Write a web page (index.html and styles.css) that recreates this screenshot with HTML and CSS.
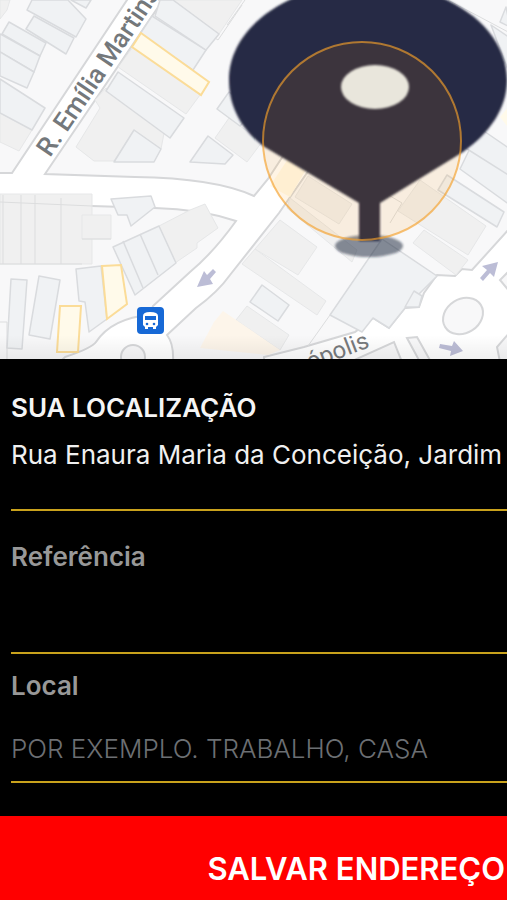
FILE: index.html
```
<!DOCTYPE html>
<html lang="pt-BR">
<head>
<meta charset="utf-8">
<meta name="viewport" content="width=device-width, initial-scale=1">
<title>Sua localização</title>
<link rel="stylesheet" href="styles.css">
</head>
<body>
<main class="screen">
  <svg class="map" viewBox="0 0 507 359" preserveAspectRatio="xMidYMid slice" role="img" aria-label="Mapa">
    <defs>
      <filter id="soft" x="-10%" y="-10%" width="120%" height="120%"><feGaussianBlur stdDeviation="1"/></filter>
      <linearGradient id="fade" x1="0" y1="0" x2="0" y2="1">
        <stop offset="0" stop-color="#000" stop-opacity="0"/>
        <stop offset="1" stop-color="#000" stop-opacity=".06"/>
      </linearGradient>
    </defs>
    <rect width="507" height="359" fill="#fff"/>
    <!-- city blocks -->
    <g class="block">
      <path d="M-3 -3H129L12 173H-3Z"/>
      <path d="M165 -3L45 174L135 177Q215 178 254 196L268 179L300 130L510 60V-3Z"/>
      <path d="M-3 201L92 206L155 208Q200 209 236 221Q213 253 190 272L153 306L150 315Q112 318 96 342Q92 348 65 357L60 362H-3Z"/>
      <path d="M167 335L196 308Q218 292 230 275L279 213L330 140L510 60V228L472 270L462 269L455 276L437 275L424 293L419 307L405 308L389 328L373 318L355 332L304 347L264 357V362H173Q174 344 167 335Z"/>
      <path d="M350 362L394 342L402 362Z"/>
      <path d="M407 338L417 337L431 362H420Z"/>
      <path d="M510 270L500 280L510 292Z"/>
      <path d="M510 332L497 347L500 362H510Z"/>
      <ellipse cx="463" cy="316" rx="21" ry="17" transform="rotate(-32 463 316)"/>
      <circle cx="133" cy="357" r="12"/>
    </g>
    <!-- plain buildings -->
    <g class="plain">
      <path d="M0 0H10L7 10L0 19Z"/>
      <path d="M0 113L32 130L19 151L0 142Z"/>
      <path d="M133 47L200 95L186 114L118 67Z"/>
      <path d="M106 88L165 128L161 149L134 130L114 161H94L76 147L100 108L95 100Z"/>
      <path d="M173 0H242L219 34Z"/>
      <path d="M229 118L262 142L247 162L215 138Z"/>
      <path d="M0 194H92V264H0Z"/><path d="M82 215H111V239H82Z"/>
      <path d="M159 226L190 210L205 204L218 228L197 243V248L175 263Z"/>
      <path d="M280 220L317 247L298 275L255 249Z"/>
      <path d="M255 249L326 301L317 315L242 264Z"/>
      <path d="M247 306L289 335L280 350L236 320Z"/>
      <path d="M308 176L352 204L339 224L295 197Z"/>
      <path d="M290 198L357 250L352 262L287 208Z"/>
      <path d="M420 180L486 226L468 255L398 211Z"/>
      <path d="M424 230L468 260L456 275L413 243Z"/>
    </g>
    <g class="plain-line">
      <path d="M3 195V264M21 195V264M35 195V264M61 198V264M0 202L92 206M0 264H82M82 239H111M0 322H7V359M118 67L152 16M158 0L218 40L242 5"/>
      <path d="M330 315L308 346M380 190L402 203L390 223M227 25L245 0M448 0L510 33"/>
    </g>
    <!-- outlined buildings -->
    <g class="house">
      <path d="M32 0H68L86 19L76 37L27 10Z"/>
      <path d="M34 16L74 38L66 54L26 29Z"/>
      <path d="M9 22L46 43L40 56L2 34Z"/>
      <path d="M0 34L40 56L34 72L0 52Z"/>
      <path d="M0 52L34 72L27 88L0 76Z"/>
      <path d="M0 79L45 108L32 130L0 113Z"/>
      <path d="M71 0L86 8L91 0Z"/>
      <path d="M152 16L206 50L193 70L140 34Z"/>
      <path d="M173 0L219 34L206 50L155 16L160 0Z"/>
      <path d="M118 72L184 118L170 138L106 91Z"/>
      <path d="M134 130L161 149L154 162H114Z"/>
      <path d="M208 136L233 155L225 164L190 162Z"/>
      <path d="M229 92L217 109L240 126L255 110Z"/>
      <path d="M111 199L151 196L155 207L131 226L127 215H118Z"/>
      <path d="M113 247L159 226L176 263L135 295Z"/><path d="M123 241L143 288M140 234L158 275"/>
      <path d="M76 269L101 266L107 319L89 332L85 302L79 301Z"/>
      <path d="M11 279L27 280L22 349L7 348Z"/>
      <path d="M39 276L60 280L50 339L29 335Z"/>
      <path d="M262 285L289 305L278 321L250 302Z"/>
      <path d="M382 239L437 276L405 308L389 328L373 318L362 332L330 315Z"/>
      <path d="M414 291L422 296L419 307H405Z"/>
      <path d="M447 175L504 212L497 227L438 190Z"/>
      <path d="M475 138L510 160V205L460 169Z"/>
      <path d="M478 127L510 149V176L464 147Z"/>
      <path d="M506 7L500 22L510 27ZM491 25L510 38V75Z"/>
    </g>
    <!-- commercial buildings -->
    <g class="shop">
      <path d="M141 33L209 82L201 95L132 47Z"/>
      <path d="M102 266L121 265L127 304L107 319Z"/>
      <path d="M60 306H81L78 352H57Z"/>
      <path d="M270 186L288 159L305 171L290 197Z" stroke="none"/>
      <path d="M500 117L510 105V130Z" stroke="none"/>
    </g>
    <path d="M223 311L280 350L268 355L200 348L214 322Z" fill="#fdf5ea"/>
    <!-- one-way arrows -->
    <g fill="#bcbdd6">
      <path d="M197 287L204 271L207 275L213 269L216 272L210 279L213 284Z"/>
      <path d="M498 262L494 277L490 273L483 281L480 278L487 270L482 266Z"/>
      <path d="M463 351L450 356L451 351L439 348L440 344L452 346L454 341Z"/>
    </g>
    <!-- street names -->
    <g class="street">
      <text transform="translate(50 158) rotate(-56)">R. Emília Martins</text>
      <text class="minor" transform="translate(310 370) rotate(-21)">ópolis</text>
    </g>
    <!-- bus stop -->
    <rect x="137" y="307" width="27" height="27" rx="4" fill="#1769d6"/>
    <path d="M143 316Q143 312 150 312Q158 312 158 316V325L156 327V329H153V327H148V329H145V327L143 325Z" fill="#fff"/>
    <path d="M145 316H156V320H145Z" fill="#1769d6"/>
    <circle cx="147" cy="324" r="1.3" fill="#1769d6"/><circle cx="154" cy="324" r="1.3" fill="#1769d6"/>
    <!-- location pin with its accuracy circle -->
    <g filter="url(#soft)">
      <ellipse cx="369" cy="246" rx="34" ry="11" fill="#1b2138" fill-opacity=".5"/>
      <path d="M263 146C240 128 229 105 229 80C229 26 291 -17 368 -17C445 -17 507 26 507 80C507 108 490 133 463 152L380 203V241H359V203Z" fill="#282c44"/>
    </g>
    <circle cx="362" cy="141" r="99" fill="#ff9800" fill-opacity=".1" stroke="#f5a02a" stroke-opacity=".65" stroke-width="2"/>
    <ellipse cx="375" cy="87" rx="34" ry="22" fill="#e9e6dc" filter="url(#soft)"/>
    <rect y="335" width="507" height="24" fill="url(#fade)"/>
  </svg>
  <form class="form">
    <div class="field address">
      <label class="title" for="address">SUA LOCALIZAÇÃO</label>
      <input id="address" type="text" value="Rua Enaura Maria da Conceição, Jardim">
    </div>
    <div class="field reference">
      <label for="reference">Referência</label>
      <input id="reference" type="text">
    </div>
    <div class="field place">
      <label for="place">Local</label>
      <input id="place" type="text" placeholder="POR EXEMPLO. TRABALHO, CASA">
    </div>
    <button class="save" type="button">SALVAR ENDEREÇO</button>
  </form>
</main>
</body>
</html>
```
FILE: styles.css
```
* { box-sizing: border-box; }
body {
  margin: 0;
  background: #000;
  font-family: Inter, "Liberation Sans", sans-serif;
}
.screen {
  display: flex;
  flex-direction: column;
  min-height: 100vh;
}
.map {
  display: block;
  flex: 1 1 0;
  min-height: 240px;
  width: 100%;
}
.block { fill: #f8f8f9; stroke: #d6d7d9; stroke-width: 2; }
.plain { fill: #f0f0f0; stroke: #e6e7e8; stroke-width: 1; }
.plain-line { fill: none; stroke: #dcddde; stroke-width: 1; }
.house { fill: #f0f2f4; stroke: #d9dbde; stroke-width: 1.5; stroke-linejoin: round; }
.shop { fill: #fffaea; stroke: #fbdc98; stroke-width: 2; }
.street {
  font: 500 26px Roboto, sans-serif;
  fill: #74787b;
  stroke: #fff;
  stroke-width: 2;
  paint-order: stroke;
}
.minor { font-size: 24px; font-weight: 400; fill: #787b7d; }
.form {
  display: flex;
  flex-direction: column;
  color: #fff;
}
.field {
  display: flex;
  flex-direction: column;
  margin-left: 11px;
  border-bottom: 2px solid #c9a21c;
}
label {
  color: #989898;
  font-size: 26px;
  font-weight: 600;
  line-height: 32px;
}
.title { color: #f5f5f5; }
input {
  width: 100%;
  height: 40px;
  padding: 0;
  border: 0;
  outline: 0;
  background: transparent;
  color: #f0f0f0;
  font: 400 26px Inter, "Liberation Sans", sans-serif;
}
input::placeholder { color: #6c6f73; font-weight: 300; opacity: 1; }
.address { padding: 33px 0 35px; gap: 10px; }
.reference { padding: 30px 0 39px; }
.place { padding: 16px 0 13px; gap: 26px; }
.save {
  height: 84px;
  margin-top: 33px;
  padding: 20px 2px 0 0;
  border: 0;
  background: #f00;
  color: #fff;
  font: 600 31px Inter, "Liberation Sans", sans-serif;
  text-align: right;
}
```
